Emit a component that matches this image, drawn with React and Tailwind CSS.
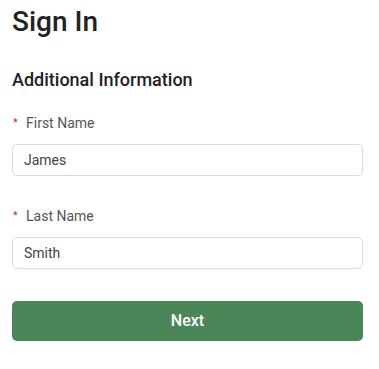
import { useState } from 'react';

const Field = ({ label, value, onChange }) => (
  <div className="flex flex-col">
    <label className="flex items-center text-[14px] leading-[20px] text-[#555]">
      <span className="text-[#d0312d] text-[11px] w-[14px] pl-[1px]">*</span>
      {label}
    </label>
    <input
      type="text"
      value={value}
      onChange={(e) => onChange(e.target.value)}
      className="mt-[11px] h-[32px] w-full rounded-[5px] border border-[#dcdcdc] bg-white px-[11px] text-[14px] text-[#444] outline-none"
    />
  </div>
);

export default function App() {
  const [first, setFirst] = useState('James');
  const [last, setLast] = useState('Smith');

  return (
    <div className="min-h-[369px] bg-white pl-[12px] pr-[16px] pt-[4px] font-['Roboto',sans-serif] text-[#222]">
      <h1 className="text-[28px] leading-[36px] font-medium text-[#222]">Sign In</h1>

      <h2 className="mt-[28px] text-[18px] leading-[24px] font-medium text-[#222]">
        Additional Information
      </h2>

      <div className="mt-[21px] flex flex-col gap-[30px]">
        <Field label="First Name" value={first} onChange={setFirst} />
        <Field label="Last Name" value={last} onChange={setLast} />
      </div>

      <button
        type="button"
        className="mt-[32px] h-[40px] w-full rounded-[5px] bg-[#4a8657] text-[16px] font-medium text-white"
      >
        Next
      </button>
    </div>
  );
}
